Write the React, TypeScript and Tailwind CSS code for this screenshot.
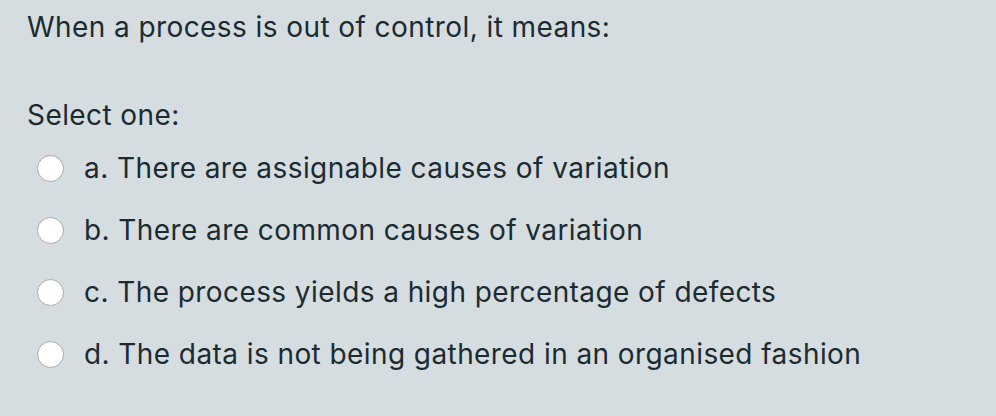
const options = [
  "a. There are assignable causes of variation",
  "b. There are common causes of variation",
  "c. The process yields a high percentage of defects",
  "d. The data is not being gathered in an organised fashion",
];

export default function App() {
  return (
    <main className="w-[996px] h-[416px] bg-[#d5dde0] text-[#1c2b30] font-['Inter',sans-serif] tracking-[0.42px] overflow-hidden">
      <div className="pl-[27px] pt-[8px]">
        <p className="text-[28px] leading-[38px]">When a process is out of control, it means:</p>
        <p className="mt-[50px] text-[28px] leading-[38px]">Select one:</p>
        <div className="mt-[3px] flex flex-col">
          {options.map((o) => (
            <label key={o} className="flex items-center h-[62px] pl-[10px]">
              <span className="w-[27px] h-[27px] rounded-full bg-white border border-[#a9a9a9] shrink-0" />
              <span className="ml-[20px] text-[28px] leading-[38px]">{o}</span>
            </label>
          ))}
        </div>
      </div>
    </main>
  );
}
